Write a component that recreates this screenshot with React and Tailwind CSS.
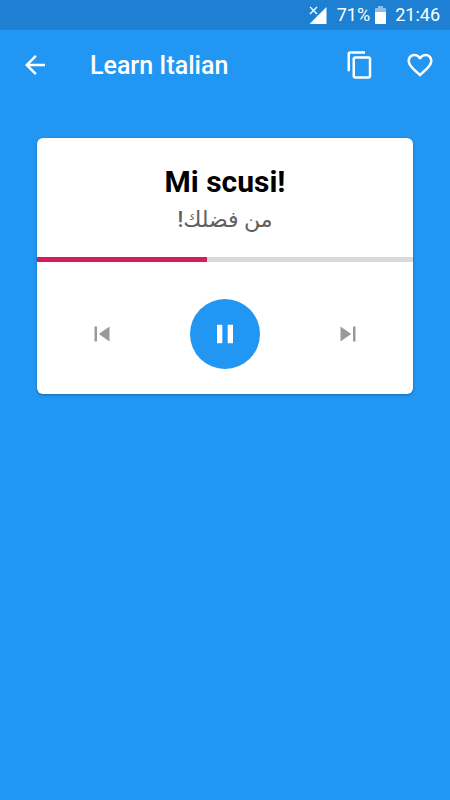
import React, { useState } from "react";
import {
  MdArrowBack,
  MdContentCopy,
  MdFavoriteBorder,
  MdPause,
  MdSkipNext,
  MdSkipPrevious,
} from "react-icons/md";

function StatusBar() {
  return (
    <div className="flex h-[30px] items-center justify-end bg-[#1d80d3] pr-[10px] text-[18px] leading-[32px] text-white">
      {/* Signal */}
      <svg viewBox="0 0 18 18" className="mr-[10px] h-[18px] w-[18px]" fill="none">
        <path d="M17.500 1v17H.5L8 10.500V10l1.500-1z" fill="#fff" />
        <path d="M1 1l7 7M8 1L1 8" stroke="#fff" strokeWidth="1.300" />
      </svg>
      <span className="mr-[5px]">71%</span>
      {/* Battery */}
      <svg viewBox="0 0 11 18" className="mr-[9px] h-[18px] w-[11px]">
        <path d="M3 0h5v2h2.200a.8.8 0 0 1 .8.8V6H0V2.800A.8.8 0 0 1 .8 2H3z" fill="#8cbfe9" />
        <path d="M0 6h11v11.200a.8.8 0 0 1-.8.8H.8a.8.8 0 0 1-.8-.8z" fill="#fff" />
      </svg>
      <span>21:46</span>
    </div>
  );
}

function Navbar() {
  return (
    <header className="flex h-[70px] items-center px-[15px] pl-5 text-white">
      <button aria-label="Back">
        <MdArrowBack size={30} />
      </button>
      <h1 className="ml-10 flex-1 pt-[2px] text-[25px] font-medium leading-[30px]">Learn Italian</h1>
      <div className="flex gap-[30px]">
        <button aria-label="Copy">
          <MdContentCopy size={30} />
        </button>
        <button aria-label="Add to favorites">
          <MdFavoriteBorder size={30} />
        </button>
      </div>
    </header>
  );
}

function PhraseCard({ phrase, translation, progress }) {
  return (
    <section className="mx-[37px] mt-[38px] overflow-hidden rounded-md bg-white shadow-[0_1px_3px_rgba(0,0,0,0.3)]">
      <div className="flex h-[119px] flex-col items-center pt-[26px]">
        <h2 className="text-[30px] font-bold leading-[36px] text-black">{phrase}</h2>
        <p
          dir="rtl"
          lang="ar"
          className="font-[Roboto,'DejaVu_Sans',sans-serif] text-[22px] font-medium leading-[40px] text-[#606060]"
        >
          {translation}
        </p>
      </div>

      <div className="h-[5px] bg-[#dadada]">
        <div className="h-full bg-[#d81b60]" style={{ width: `${progress}%` }} />
      </div>

      <div className="flex items-center justify-between px-[50px] pb-[25px] pt-[37px] text-[#999999]">
        <button aria-label="Previous">
          <MdSkipPrevious size={30} />
        </button>
        <button
          aria-label="Pause"
          className="flex size-[70px] items-center justify-center rounded-full bg-[#2196f3] text-white"
        >
          <MdPause size={32} />
        </button>
        <button aria-label="Next">
          <MdSkipNext size={30} />
        </button>
      </div>
    </section>
  );
}

export default function App() {
  const [progress] = useState(45.2);

  return (
    <div className="min-h-screen bg-[#2196f3] font-[Roboto,sans-serif]">
      <StatusBar />
      <Navbar />
      <main>
        <PhraseCard phrase="Mi scusi!" translation="من فضلك!" progress={progress} />
      </main>
    </div>
  );
}
